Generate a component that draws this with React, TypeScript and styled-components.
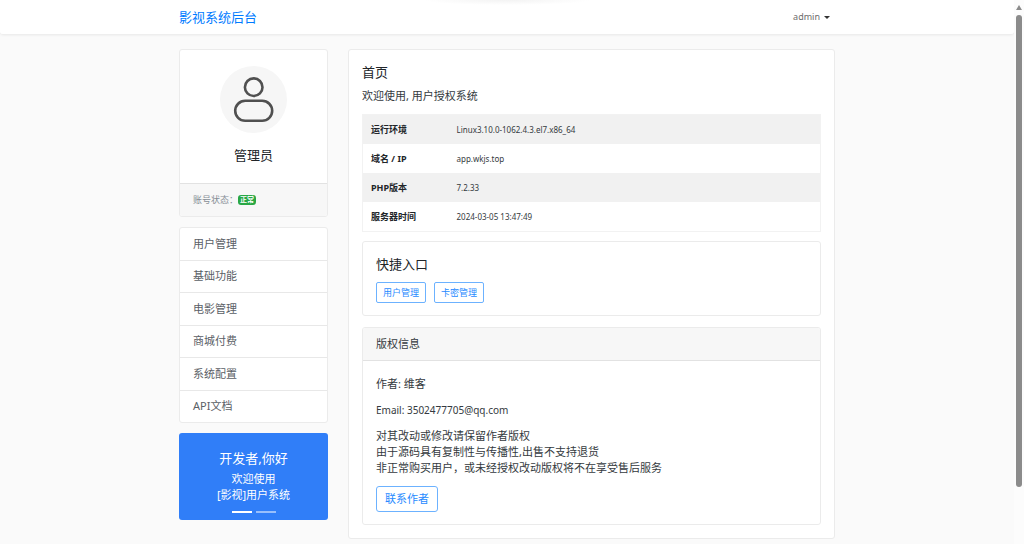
import React from "react";
import styled, { createGlobalStyle } from "styled-components";

const GlobalStyle = createGlobalStyle`
  * { box-sizing: border-box; }
  html { scrollbar-width: none; background: #fafafa; }
  body {
    margin: 0;
    padding-right: 10px;
    background: #fafafa;
    color: #343a40;
    font-family: "Noto Sans", "Noto Sans CJK SC", sans-serif;
    font-size: 11px;
    line-height: 16px;
  }
  h1, h2, h3, p, ul { margin: 0; padding: 0; font-weight: 400; }
  ul { list-style: none; }
  a { text-decoration: none; color: inherit; }
  button { font-family: inherit; cursor: pointer; }
`;

const Container = styled.div`
  max-width: 656px;
  margin: 0 auto;
  display: flex;
`;

const Navbar = styled.header`
  background: radial-gradient(84px 5px at 50% 0, #f3f3f3, #fff);
  border-radius: 0 0 3px 3px;
  box-shadow: 0 1px 3px rgba(0, 0, 0, 0.08);
`;

const NavInner = styled(Container)`
  height: 34px;
  align-items: center;
  justify-content: space-between;
`;

const Brand = styled.a`
  color: #007bff;
  font-size: 13px;
  line-height: 20px;
`;

const UserMenu = styled.button`
  display: flex;
  align-items: center;
  gap: 4px;
  padding: 0 5px;
  border: 0;
  background: none;
  color: #6c6c6c;
  font-size: 9px;
  line-height: 16px;

  &::after {
    content: "";
    border: 3px solid transparent;
    border-top-color: #333;
    border-bottom: 0;
  }
`;

const Page = styled(Container)`
  align-items: flex-start;
  gap: 20px;
  padding: 15px 0 6px;
`;

const Sidebar = styled.aside`
  flex: 0 0 149px;
  display: flex;
  flex-direction: column;
  gap: 10px;
`;

const Card = styled.section`
  background: #fff;
  border: 1px solid #ebebeb;
  border-radius: 3px;
  overflow: hidden;
`;

const Profile = styled.div`
  display: flex;
  flex-direction: column;
  align-items: center;
  gap: 12px;
  padding: 16px 13px 18px;
`;

const Avatar = styled.svg`
  display: block;
  width: 67px;
  height: 67px;
`;

const Heading = styled.h2`
  font-size: 13px;
  line-height: 20px;
  color: #212529;
`;

const Status = styled.div`
  display: flex;
  align-items: center;
  padding: 8px 13px;
  border-top: 1px solid #e2e2e2;
  background: #f7f7f7;
  color: #868e96;
  font-size: 9px;
`;

const Badge = styled.span`
  padding: 0 2px;
  border-radius: 3px;
  background: #28a745;
  color: #fff;
  font-size: 7px;
  font-weight: 700;
  line-height: 10px;
`;

const Menu = styled.ul`
  display: flex;
  flex-direction: column;
  min-height: 194px;
`;

const MenuItem = styled.li`
  flex: 1;
  display: flex;

  & + & { border-top: 1px solid #e8e8e8; }
`;

const MenuLink = styled.a`
  flex: 1;
  display: flex;
  align-items: center;
  padding: 0 13px;
  color: #5a6066;
`;

const Banner = styled.section`
  display: flex;
  flex-direction: column;
  align-items: center;
  padding: 15px 13px 7px;
  border-radius: 3px;
  background: #307ef8;
  color: #fff;
  text-align: center;
`;

const BannerTitle = styled.h2`
  font-size: 13px;
  line-height: 20px;
  margin-bottom: 3px;
`;

const Dots = styled.div`
  display: flex;
  gap: 4px;
  padding-top: 8px;
`;

const Dot = styled.span<{ $active?: boolean }>`
  width: 20px;
  height: 2px;
  background: ${(p) => (p.$active ? "#fff" : "rgba(255, 255, 255, 0.5)")};
`;

const Main = styled(Card).attrs({ as: "main" })`
  flex: 1;
  min-width: 0;
  padding: 12px 13px 13px;
`;

const Intro = styled.p`
  padding: 6px 0 10px;
`;

const InfoTable = styled.table`
  width: 100%;
  border-collapse: collapse;
  border: 1px solid #f2f2f2;
  line-height: 13px;
  margin-bottom: 9px;

  th, td { padding: 8px; text-align: left; }
  th { width: 86px; font-size: 9px; font-weight: 700; color: #212529; }
  td { font-size: 8px; }
  tr:nth-child(odd) { background: #f1f1f1; }
`;

const QuickCard = styled(Card)`
  padding: 12px 13px;
  margin-bottom: 11px;
`;

const ButtonRow = styled.div`
  display: flex;
  gap: 8px;
  padding-top: 8px;
`;

const OutlineButton = styled.button<{ $small?: boolean }>`
  padding: ${(p) => (p.$small ? "2px 6px" : "4px 8px")};
  border: 1px solid #6cb2ff;
  border-radius: ${(p) => (p.$small ? "2px" : "3px")};
  background: #fff;
  color: #1f8aff;
  font-size: ${(p) => (p.$small ? "9px" : "11px")};
  line-height: ${(p) => (p.$small ? "15px" : "16px")};
`;

const CardHeader = styled.h3`
  padding: 8px 13px;
  border-bottom: 1px solid #e2e2e2;
  background: #f7f7f7;
  font-size: 11px;
  line-height: 16px;
`;

const CardBody = styled.div`
  display: flex;
  flex-direction: column;
  align-items: flex-start;
  gap: 10px;
  padding: 15px 13px 12px;
`;

const Email = styled.p`
  font-size: 10px;
`;

const menu = ["用户管理", "基础功能", "电影管理", "商城付费", "系统配置", "API文档"];

const info = [
  ["运行环境", "Linux3.10.0-1062.4.3.el7.x86_64"],
  ["域名 / IP", "app.wkjs.top"],
  ["PHP版本", "7.2.33"],
  ["服务器时间", "2024-03-05 13:47:49"],
];

const ScrollRail = styled.div`
  position: fixed;
  top: 0;
  right: 0;
  bottom: 0;
  width: 10px;
  display: flex;
  flex-direction: column;
  align-items: center;
  gap: 5px;
  padding: 5px 0 57px;
  background: #fcfcfc;

  &::before {
    content: "";
    border: 3px solid transparent;
    border-bottom: 5px solid #8b8b8b;
    border-top: 0;
  }
  &::after {
    content: "";
    flex: 1;
    width: 6px;
    border-radius: 3px;
    background: #8b8b8b;
  }
`;

export default function App() {
  return (
    <>
      <GlobalStyle />
      <Navbar>
        <NavInner>
          <Brand href="#">影视系统后台</Brand>
          <UserMenu type="button">admin</UserMenu>
        </NavInner>
      </Navbar>
      <Page>
        <Sidebar>
          <Card>
            <Profile>
              <Avatar viewBox="0 0 67 67" aria-hidden="true">
                <circle cx="33.5" cy="33.5" r="33.5" fill="#f6f6f6" />
                <g fill="none" stroke="#505050" strokeWidth="2.6">
                  <circle cx="33.7" cy="21.2" r="8.8" />
                  <rect x="15.2" y="34.8" width="37" height="20" rx="10" />
                </g>
              </Avatar>
              <Heading>管理员</Heading>
            </Profile>
            <Status>
              账号状态：<Badge>正常</Badge>
            </Status>
          </Card>
          <Card as="nav">
            <Menu>
              {menu.map((label) => (
                <MenuItem key={label}>
                  <MenuLink href="#">{label}</MenuLink>
                </MenuItem>
              ))}
            </Menu>
          </Card>
          <Banner>
            <BannerTitle>开发者,你好</BannerTitle>
            <p>
              欢迎使用
              <br />
              [影视]用户系统
            </p>
            <Dots>
              <Dot $active />
              <Dot />
            </Dots>
          </Banner>
        </Sidebar>
        <Main>
          <Heading as="h1">首页</Heading>
          <Intro>欢迎使用, 用户授权系统</Intro>
          <InfoTable>
            <tbody>
              {info.map(([name, value]) => (
                <tr key={name}>
                  <th scope="row">{name}</th>
                  <td>{value}</td>
                </tr>
              ))}
            </tbody>
          </InfoTable>
          <QuickCard>
            <Heading>快捷入口</Heading>
            <ButtonRow>
              <OutlineButton type="button" $small>用户管理</OutlineButton>
              <OutlineButton type="button" $small>卡密管理</OutlineButton>
            </ButtonRow>
          </QuickCard>
          <Card>
            <CardHeader>版权信息</CardHeader>
            <CardBody>
              <p>作者: 维客</p>
              <Email>Email: 3502477705@qq.com</Email>
              <p>
                对其改动或修改请保留作者版权
                <br />
                由于源码具有复制性与传播性,出售不支持退货
                <br />
                非正常购买用户，或未经授权改动版权将不在享受售后服务
              </p>
              <OutlineButton type="button">联系作者</OutlineButton>
            </CardBody>
          </Card>
        </Main>
      </Page>
      <ScrollRail aria-hidden="true" />
    </>
  );
}
